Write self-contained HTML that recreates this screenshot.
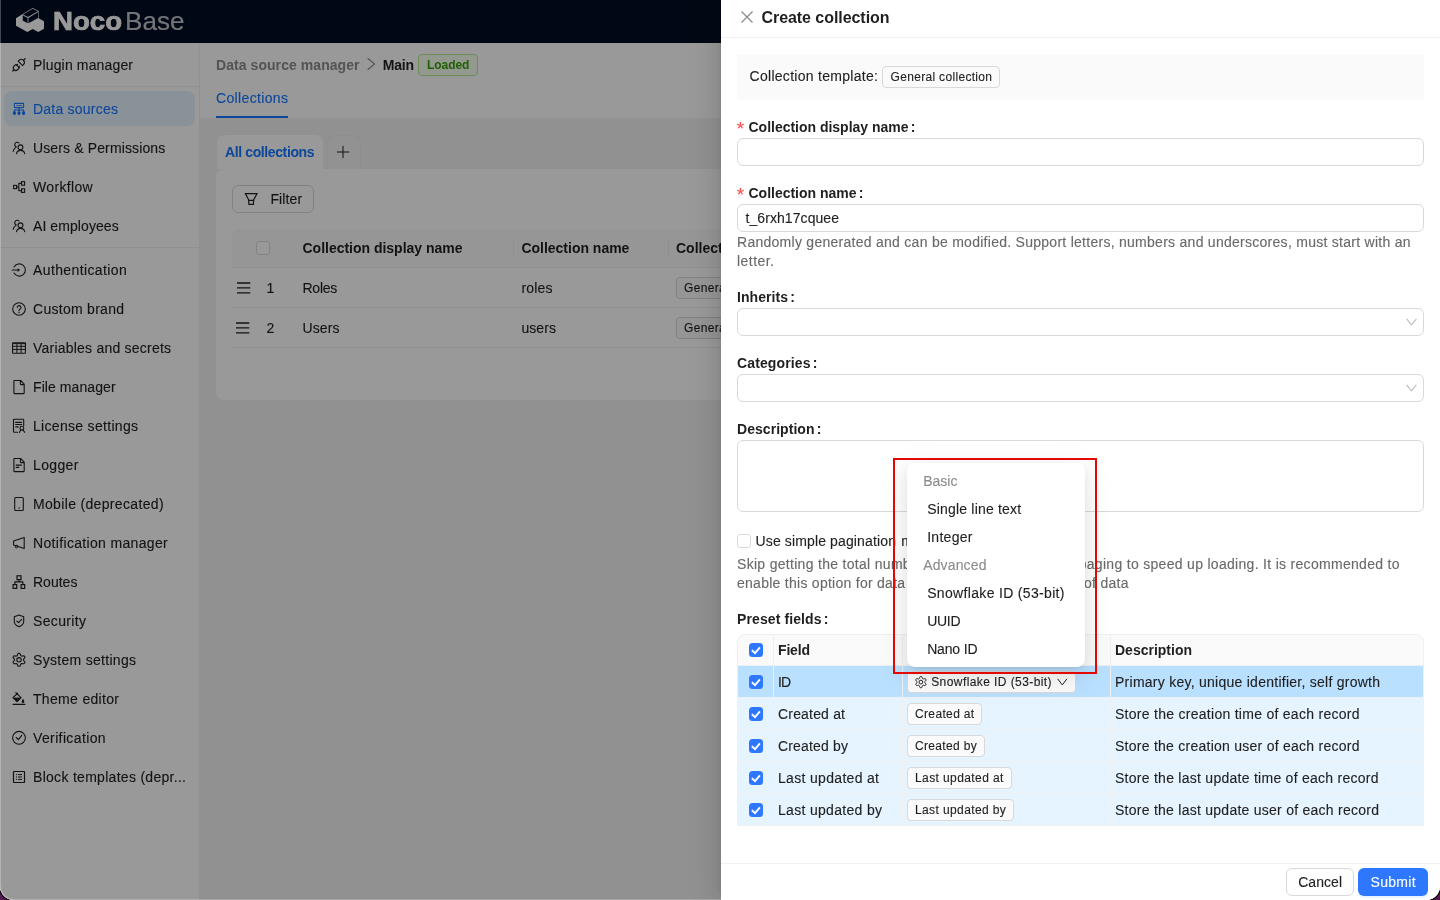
<!DOCTYPE html>
<html lang="en"><head><meta charset="utf-8"><title>Create collection - NocoBase</title>
<style>
*{box-sizing:border-box;margin:0;padding:0}
html,body{width:1440px;height:900px;overflow:hidden;background:#551a4f;font-family:"Liberation Sans",Arial,sans-serif;}
#win{will-change:transform;position:absolute;left:0;top:0;width:1440px;height:900px;overflow:hidden;border-radius:0 0 14px 14px;background:#fff;box-shadow:0 0 0 1.5px rgba(0,0,0,0.75)}
.t{position:absolute;white-space:nowrap;-webkit-text-stroke:0.12px currentColor;}
.b{position:absolute;}
svg{position:absolute;overflow:visible}
#base{position:absolute;left:0;top:0;width:1440px;height:900px;background:#f2f2f2}
#mask{position:absolute;left:0;top:0;width:1440px;height:900px;background:rgba(0,0,0,0.4)}
#drawer{position:absolute;left:721px;top:0;width:719px;height:900px;background:#fff;box-shadow:-6px 0 16px 0 rgba(0,0,0,0.08),-3px 0 6px -4px rgba(0,0,0,0.12),-9px 0 28px 8px rgba(0,0,0,0.05)}
.tag{position:absolute;border:1px solid #d9d9d9;background:#fafafa;border-radius:4px;height:22px}
.inp{position:absolute;border:1px solid #d9d9d9;background:#fff;border-radius:6px}
.cb{position:absolute;width:14px;height:14px;border-radius:3.5px;background:#2e78ff}
</style></head><body><div id="win">
<div id="base">
<div class="b" style="left:0px;top:0px;width:1440px;height:43px;background:#020e23"></div><span class="t" style="left:53px;top:5.5px;font-size:25px;line-height:30px;color:#fff;font-weight:700;-webkit-text-stroke:0;display:inline-block;transform-origin:0 50%;transform:scaleX(1.1040);-webkit-text-stroke:0.7px #fff;">Noco</span><span class="t" style="left:124.5px;top:5.5px;font-size:25px;line-height:30px;color:#fff;display:inline-block;transform-origin:0 50%;transform:scaleX(1.0442);opacity:.75;">Base</span><svg style="left:0;top:0" width="60" height="43" viewBox="0 0 60 43"><path d="M16 18.3L22.3 14.3L32.7 8L38.7 11V18.3L44 21.3V28.7L38.3 32L32.7 29L27.3 32L16 25.7Z" fill="#fff"/><path d="M23.0 14.5L32.7 8.7L37.9 11.2L28.0 17.1Z M22.7 15.2L27.6 18.0V23.3L22.7 20.5Z M28.4 17.9L38.2 12.0V18.0L28.4 23.3Z" fill="#020e23"/></svg><div class="b" style="left:0px;top:43px;width:199px;height:857px;background:#fff"></div><div class="b" style="left:199px;top:43px;width:1px;height:857px;background:#f0f0f0"></div><div class="b" style="left:200px;top:43px;width:1240px;height:75px;background:#fff"></div><div class="b" style="left:4px;top:91px;width:191px;height:35px;background:#e6f4ff;border-radius:8px"></div><div class="b" style="left:0px;top:86px;width:199px;height:1px;background:#f0f0f0"></div><div class="b" style="left:0px;top:247px;width:199px;height:1px;background:#f0f0f0"></div><span class="t" style="left:33px;top:55px;font-size:14px;line-height:20px;color:#1f1f1f;letter-spacing:0.149px;">Plugin manager</span><svg style="left:9px;top:55px" width="20" height="20" viewBox="9 55 20 20"><g transform="rotate(-45 19 64.8)"><path d="M10.2 64.8 h1.7" stroke="#1f1f1f" stroke-width="1.2" fill="none" stroke-linecap="round" stroke-linejoin="round" /><path d="M17.1 62.3 v5 h-2.6 a2.5 2.5 0 0 1 0-5z" stroke="#1f1f1f" stroke-width="1.1" fill="none" stroke-linecap="round" stroke-linejoin="round" /><path d="M17.1 63.5 h1.4 M17.1 66.1 h1.4" stroke="#1f1f1f" stroke-width="1.1" fill="none" stroke-linecap="round" stroke-linejoin="round" /><path d="M21 61.7 v6.2 h1.2 a3.1 3.1 0 0 0 0-6.2z" stroke="#1f1f1f" stroke-width="1.1" fill="none" stroke-linecap="round" stroke-linejoin="round" /><path d="M25.4 64.8 h2.4" stroke="#1f1f1f" stroke-width="1.2" fill="none" stroke-linecap="round" stroke-linejoin="round" /></g></svg><span class="t" style="left:33px;top:99px;font-size:14px;line-height:20px;color:#1677ff;letter-spacing:0.229px;">Data sources</span><svg style="left:9px;top:99px" width="20" height="20" viewBox="9 99 20 20"><path d="M14.9 103.4 h8.2 a0.5 0.5 0 0 1 .5 .5 v3.2 a0.5 0.5 0 0 1 -.5 .5 h-8.2 a0.5 0.5 0 0 1 -.5-.5 v-3.2 a.5 .5 0 0 1 .5-.5z" stroke="#1677ff" stroke-width="1.1" fill="none" stroke-linecap="round" stroke-linejoin="round" /><circle cx="17" cy="105.5" r="0.7" fill="#1677ff"/><path d="M18.6 105.5 h3" stroke="#1677ff" stroke-width="0.9" fill="none" stroke-linecap="round" stroke-linejoin="round" /><path d="M19 107.6 v3.6 M14.4 111.6 v-1.6 h9.2 v1.6" stroke="#1677ff" stroke-width="1.1" fill="none" stroke-linecap="round" stroke-linejoin="round" /><rect x="12.9" y="111.3" width="3" height="3.6" rx="1.3" fill="#1677ff"/><rect x="17.5" y="111.3" width="3" height="3.6" rx="1.3" fill="#1677ff"/><rect x="22.1" y="111.3" width="3" height="3.6" rx="1.3" fill="#1677ff"/></svg><span class="t" style="left:33px;top:138px;font-size:14px;line-height:20px;color:#1f1f1f;letter-spacing:0.132px;">Users &amp; Permissions</span><svg style="left:9px;top:138px" width="20" height="20" viewBox="9 138 20 20"><circle cx="20.5" cy="147.3" r="2.4" stroke="#1f1f1f" stroke-width="1.1" fill="none"/><path d="M16.5 153.7 a4.2 4.2 0 0 1 8.2 0" stroke="#1f1f1f" stroke-width="1.1" fill="none" stroke-linecap="round" stroke-linejoin="round" /><path d="M18.9 142.8 A2.5 2.5 0 1 0 16.45 147.05" stroke="#1f1f1f" stroke-width="1.1" fill="none" stroke-linecap="round" stroke-linejoin="round" /><path d="M15.6 147.6 Q13.6 148.8 13.2 151.4" stroke="#1f1f1f" stroke-width="1.1" fill="none" stroke-linecap="round" stroke-linejoin="round" /></svg><span class="t" style="left:33px;top:177px;font-size:14px;line-height:20px;color:#1f1f1f;letter-spacing:0.342px;">Workflow</span><svg style="left:9px;top:177px" width="20" height="20" viewBox="9 177 20 20"><rect x="13.6" y="185.4" width="3" height="3.2" stroke="#1f1f1f" stroke-width="1.1" fill="none"/><rect x="21.6" y="181.6" width="3" height="3.6" stroke="#1f1f1f" stroke-width="1.1" fill="none"/><rect x="21.6" y="188.8" width="3" height="3.6" stroke="#1f1f1f" stroke-width="1.1" fill="none"/><path d="M16.8 187 h2 M21.4 183.4 h-2.6 v7.2 h2.6" stroke="#1f1f1f" stroke-width="1.1" fill="none" stroke-linecap="round" stroke-linejoin="round" /></svg><span class="t" style="left:33px;top:216px;font-size:14px;line-height:20px;color:#1f1f1f;letter-spacing:0.080px;">AI employees</span><svg style="left:9px;top:216px" width="20" height="20" viewBox="9 216 20 20"><circle cx="20.5" cy="225.3" r="2.4" stroke="#1f1f1f" stroke-width="1.1" fill="none"/><path d="M16.5 231.7 a4.2 4.2 0 0 1 8.2 0" stroke="#1f1f1f" stroke-width="1.1" fill="none" stroke-linecap="round" stroke-linejoin="round" /><path d="M18.9 220.8 A2.5 2.5 0 1 0 16.45 225.05" stroke="#1f1f1f" stroke-width="1.1" fill="none" stroke-linecap="round" stroke-linejoin="round" /><path d="M15.6 225.6 Q13.6 226.8 13.2 229.4" stroke="#1f1f1f" stroke-width="1.1" fill="none" stroke-linecap="round" stroke-linejoin="round" /></svg><span class="t" style="left:33px;top:260px;font-size:14px;line-height:20px;color:#1f1f1f;letter-spacing:0.382px;">Authentication</span><svg style="left:9px;top:260px" width="20" height="20" viewBox="9 260 20 20"><path d="M14.02 266.95 A6.1 6.1 0 1 1 14.02 273.05" stroke="#1f1f1f" stroke-width="1.1" fill="none" stroke-linecap="round" stroke-linejoin="round" /><path d="M12.2 270 h6" stroke="#1f1f1f" stroke-width="1.1" fill="none" stroke-linecap="round" stroke-linejoin="round" /><path d="M17.6 268.1 l2.4 1.9 l-2.4 1.9z" fill="#1f1f1f"/></svg><span class="t" style="left:33px;top:299px;font-size:14px;line-height:20px;color:#1f1f1f;letter-spacing:0.279px;">Custom brand</span><svg style="left:9px;top:299px" width="20" height="20" viewBox="9 299 20 20"><circle cx="19" cy="309" r="6.3" stroke="#1f1f1f" stroke-width="1.1" fill="none"/><path d="M17.2 307.4 a1.9 1.9 0 1 1 2.6 1.9 q-.8 .4 -.8 1.5" stroke="#1f1f1f" stroke-width="1.1" fill="none" stroke-linecap="round" stroke-linejoin="round" /><circle cx="19" cy="312.4" r="0.7" fill="#1f1f1f"/></svg><span class="t" style="left:33px;top:338px;font-size:14px;line-height:20px;color:#1f1f1f;letter-spacing:0.221px;">Variables and secrets</span><svg style="left:9px;top:338px" width="20" height="20" viewBox="9 338 20 20"><rect x="12.6" y="342.8" width="12.8" height="10.4" rx="0.5" stroke="#1f1f1f" stroke-width="1.1" fill="none"/><path d="M12.6 343.6 h12.8 M12.6 346.3 h12.8 M12.6 349.4 h12.8 M16.9 344 v8.6 M21.1 344 v8.6" stroke="#1f1f1f" stroke-width="1" fill="none" stroke-linecap="round" stroke-linejoin="round" /></svg><span class="t" style="left:33px;top:377px;font-size:14px;line-height:20px;color:#1f1f1f;letter-spacing:0.082px;">File manager</span><svg style="left:9px;top:377px" width="20" height="20" viewBox="9 377 20 20"><path d="M14.4 380.5 h6.2 l3.6 3.6 v9 a.5 .5 0 0 1 -.5 .5 h-9.3 a.5 .5 0 0 1 -.5-.5 v-12.1 a.5 .5 0 0 1 .5-.5z M20.4 380.7 v3.4 a.5.5 0 0 0 .5 .5 h3.2" stroke="#1f1f1f" stroke-width="1.1" fill="none" stroke-linecap="round" stroke-linejoin="round" /></svg><span class="t" style="left:33px;top:416px;font-size:14px;line-height:20px;color:#1f1f1f;letter-spacing:0.307px;">License settings</span><svg style="left:9px;top:416px" width="20" height="20" viewBox="9 416 20 20"><path d="M17.5 432.2 h-3.4 a.6 .6 0 0 1 -.6 -.6 v-11.8 a.6 .6 0 0 1 .6-.6 h9 a.6.6 0 0 1 .6 .6 v5.6" stroke="#1f1f1f" stroke-width="1.1" fill="none" stroke-linecap="round" stroke-linejoin="round" /><path d="M15.6 422.4 h6 M15.6 424.5 h6" stroke="#1f1f1f" stroke-width="1.1" fill="none" stroke-linecap="round" stroke-linejoin="round" /><path d="M15.8 426.9 h2.4" stroke="#1f1f1f" stroke-width="1.2" fill="none" stroke-linecap="round" stroke-linejoin="round" /><circle cx="21.9" cy="428.2" r="1.9" stroke="#1f1f1f" stroke-width="1.1" fill="none"/><path d="M20.8 429.9 l-1.5 2.6 M23 429.9 l1.6 2.4" stroke="#1f1f1f" stroke-width="1.1" fill="none" stroke-linecap="round" stroke-linejoin="round" /></svg><span class="t" style="left:33px;top:455px;font-size:14px;line-height:20px;color:#1f1f1f;letter-spacing:0.342px;">Logger</span><svg style="left:9px;top:455px" width="20" height="20" viewBox="9 455 20 20"><path d="M14.4 458.5 h6.2 l3.6 3.6 v9 a.5 .5 0 0 1 -.5 .5 h-9.3 a.5 .5 0 0 1 -.5-.5 v-12.1 a.5 .5 0 0 1 .5-.5z M20.4 458.7 v3.4 a.5.5 0 0 0 .5 .5 h3.2" stroke="#1f1f1f" stroke-width="1.1" fill="none" stroke-linecap="round" stroke-linejoin="round" /><path d="M16.2 465.1 h5.2" stroke="#1f1f1f" stroke-width="1.3" fill="none" stroke-linecap="round" stroke-linejoin="round" /><path d="M16.2 467.4 h2.6" stroke="#1f1f1f" stroke-width="1.1" fill="none" stroke-linecap="round" stroke-linejoin="round" /></svg><span class="t" style="left:33px;top:494px;font-size:14px;line-height:20px;color:#1f1f1f;letter-spacing:0.338px;">Mobile (deprecated)</span><svg style="left:9px;top:494px" width="20" height="20" viewBox="9 494 20 20"><rect x="14.7" y="497.5" width="8.6" height="13" rx="1" stroke="#1f1f1f" stroke-width="1.1" fill="none"/><circle cx="19.1" cy="508" r="0.7" fill="#1f1f1f"/></svg><span class="t" style="left:33px;top:533px;font-size:14px;line-height:20px;color:#1f1f1f;letter-spacing:0.332px;">Notification manager</span><svg style="left:9px;top:533px" width="20" height="20" viewBox="9 533 20 20"><path d="M24.2 537.4 v11.2 l-10.6 -3.6 v-4z" stroke="#1f1f1f" stroke-width="1.1" fill="none" stroke-linecap="round" stroke-linejoin="round" /><circle cx="16.5" cy="546.6" r="1.3" stroke="#1f1f1f" stroke-width="1" fill="none"/></svg><span class="t" style="left:33px;top:572px;font-size:14px;line-height:20px;color:#1f1f1f;letter-spacing:0.008px;">Routes</span><svg style="left:9px;top:572px" width="20" height="20" viewBox="9 572 20 20"><rect x="17" y="575.8" width="4" height="3.8" stroke="#1f1f1f" stroke-width="1.2" fill="none"/><rect x="13.1" y="584.6" width="3.6" height="3.8" stroke="#1f1f1f" stroke-width="1.2" fill="none"/><rect x="21.1" y="584.6" width="3.6" height="3.8" stroke="#1f1f1f" stroke-width="1.2" fill="none"/><path d="M19 579.8 v2 M14.9 584.3 v-2.4 h8 v2.4" stroke="#1f1f1f" stroke-width="1.1" fill="none" stroke-linecap="round" stroke-linejoin="round" /></svg><span class="t" style="left:33px;top:611px;font-size:14px;line-height:20px;color:#1f1f1f;letter-spacing:0.347px;">Security</span><svg style="left:9px;top:611px" width="20" height="20" viewBox="9 611 20 20"><path d="M19 615.1 l4.7 1.6 v4.8 q0 3.4 -4.7 5.3 q-4.7 -1.9 -4.7 -5.3 v-4.8z" stroke="#1f1f1f" stroke-width="1.1" fill="none" stroke-linecap="round" stroke-linejoin="round" /><path d="M16.9 621.2 l1.6 1.5 l3.2 -3.4" stroke="#1f1f1f" stroke-width="1.1" fill="none" stroke-linecap="round" stroke-linejoin="round" /></svg><span class="t" style="left:33px;top:650px;font-size:14px;line-height:20px;color:#1f1f1f;letter-spacing:0.299px;">System settings</span><svg style="left:9px;top:650px" width="20" height="20" viewBox="9 650 20 20"><path d="M23.55 659.80L23.53 659.40L23.67 658.98L24.31 658.38L24.88 657.66L24.85 657.07L24.59 656.57L24.28 656.10L23.80 655.78L22.89 655.91L22.05 656.17L21.61 656.07L21.27 655.86L20.92 655.68L20.62 655.35L20.42 654.49L20.09 653.64L19.56 653.37L19.00 653.35L18.44 653.37L17.91 653.64L17.58 654.49L17.38 655.35L17.08 655.68L16.73 655.86L16.39 656.07L15.95 656.17L15.11 655.91L14.20 655.78L13.72 656.10L13.41 656.57L13.15 657.07L13.12 657.66L13.69 658.38L14.33 658.98L14.47 659.40L14.45 659.80L14.47 660.20L14.33 660.62L13.69 661.22L13.12 661.94L13.15 662.53L13.41 663.02L13.72 663.50L14.20 663.82L15.11 663.69L15.95 663.43L16.39 663.53L16.72 663.74L17.08 663.92L17.38 664.25L17.58 665.11L17.91 665.96L18.44 666.23L19.00 666.25L19.56 666.23L20.09 665.96L20.42 665.11L20.62 664.25L20.92 663.92L21.27 663.74L21.61 663.53L22.05 663.43L22.89 663.69L23.80 663.82L24.28 663.50L24.59 663.02L24.85 662.53L24.88 661.94L24.31 661.22L23.67 660.62L23.53 660.20Z" stroke="#1f1f1f" stroke-width="1.1" fill="none" stroke-linecap="round" stroke-linejoin="round" /><circle cx="19" cy="659.8" r="2.2" stroke="#1f1f1f" stroke-width="1.1" fill="none"/></svg><span class="t" style="left:33px;top:689px;font-size:14px;line-height:20px;color:#1f1f1f;letter-spacing:0.320px;">Theme editor</span><svg style="left:9px;top:689px" width="20" height="20" viewBox="9 689 20 20"><path d="M15.8 692.7 l5.2 5 l-4 4 l-4 -4 l4.6 -4.6" stroke="#1f1f1f" stroke-width="1.1" fill="none" stroke-linecap="round" stroke-linejoin="round" /><path d="M13.3 697.9 h7.4 l-3.7 3.7z" fill="#1f1f1f" stroke="#1f1f1f" stroke-width="0.6"/><path d="M23 698.8 q1.5 2 1.3 2.9 a1.3 1.3 0 0 1 -2.6 0 q-.2 -.9 1.3 -2.9z" fill="#1f1f1f"/><path d="M13.2 704.4 h11.6" stroke="#1f1f1f" stroke-width="1.3" fill="none" stroke-linecap="round" stroke-linejoin="round" /></svg><span class="t" style="left:33px;top:728px;font-size:14px;line-height:20px;color:#1f1f1f;letter-spacing:0.374px;">Verification</span><svg style="left:9px;top:728px" width="20" height="20" viewBox="9 728 20 20"><circle cx="19" cy="737.8" r="6.4" stroke="#1f1f1f" stroke-width="1.1" fill="none"/><path d="M16.2 737.5 l2.2 2.1 l3.3 -4.2" stroke="#1f1f1f" stroke-width="1.1" fill="none" stroke-linecap="round" stroke-linejoin="round" /></svg><span class="t" style="left:33px;top:767px;font-size:14px;line-height:20px;color:#1f1f1f;letter-spacing:0.292px;">Block templates (depr...</span><svg style="left:9px;top:767px" width="20" height="20" viewBox="9 767 20 20"><rect x="13.5" y="771.5" width="11" height="11" rx="0.4" stroke="#1f1f1f" stroke-width="1.2" fill="none"/><rect x="16" y="774.1" width="1" height="1" fill="#1f1f1f"/><path d="M18.4 774.6 h3.2" stroke="#1f1f1f" stroke-width="1" fill="none" stroke-linecap="round" stroke-linejoin="round" /><rect x="16" y="776.5" width="1" height="1" fill="#1f1f1f"/><path d="M18.4 777 h3.2" stroke="#1f1f1f" stroke-width="1" fill="none" stroke-linecap="round" stroke-linejoin="round" /><rect x="16" y="778.9" width="1" height="1" fill="#1f1f1f"/><path d="M18.4 779.4 h3.2" stroke="#1f1f1f" stroke-width="1" fill="none" stroke-linecap="round" stroke-linejoin="round" /></svg><span class="t" style="left:216px;top:54.6px;font-size:14px;line-height:20px;color:#8c8c8c;font-weight:700;-webkit-text-stroke:0;letter-spacing:0.062px;">Data source manager</span><svg style="left:367px;top:57px" width="9" height="14" viewBox="0 0 9 14"><path d="M1 1.5L7.5 7L1 12.5" stroke="#8c8c8c" stroke-width="1.1" fill="none" stroke-linecap="round" stroke-linejoin="round" /></svg><span class="t" style="left:382.7px;top:54.6px;font-size:14px;line-height:20px;color:#1f1f1f;font-weight:700;-webkit-text-stroke:0;letter-spacing:-0.196px;">Main</span><div class="tag" style="left:418px;top:54px;width:60px;height:22px;border-color:#b7eb8f;background:#f6ffed"></div><span class="t" style="left:427px;top:55px;font-size:12px;line-height:20px;color:#389e0d;font-weight:700;-webkit-text-stroke:0;letter-spacing:-0.053px;">Loaded</span><span class="t" style="left:216px;top:88px;font-size:14px;line-height:20px;color:#1677ff;letter-spacing:0.352px;">Collections</span><div class="b" style="left:216px;top:116px;width:72px;height:2px;background:#1677ff"></div><div class="b" style="left:217px;top:135px;width:106px;height:34px;background:#fff;border-radius:8px 8px 0 0"></div><span class="t" style="left:225px;top:142px;font-size:14px;line-height:20px;color:#1677ff;font-weight:700;-webkit-text-stroke:0;letter-spacing:-0.386px;">All collections</span><div class="b" style="left:326.5px;top:134.5px;width:34px;height:34px;background:rgba(255,255,255,0.12);border-radius:8px 8px 0 0;border:1px solid #ececec;border-bottom:none"></div><svg style="left:337px;top:146px" width="12" height="12" viewBox="0 0 12 12"><path d="M6 0.3V11.7M0.3 6H11.7" stroke="#1f1f1f" stroke-width="1" fill="none" stroke-linecap="round" stroke-linejoin="round" /></svg><div class="b" style="left:216px;top:169px;width:1224px;height:231px;background:#fff;border-radius:8px"></div><div class="b" style="left:232px;top:185px;width:81.5px;height:27.5px;border:1px solid #d9d9d9;border-radius:6px;background:#fff"></div><svg style="left:244px;top:192px" width="14" height="14" viewBox="0 0 14 14"><path d="M1.2 1.7H13.2 M1.6 2L4.9 8.2 M12.8 2L9.5 8.2 M4.6 8.3H9.8" stroke="#1f1f1f" stroke-width="1.2" fill="none" stroke-linecap="round" stroke-linejoin="round" /><path d="M4.8 8.3V12.3H9.5V8.3" stroke="#1f1f1f" stroke-width="1.2" fill="none" stroke-linecap="round" stroke-linejoin="round" /></svg><span class="t" style="left:270.4px;top:189px;font-size:14px;line-height:20px;color:#1f1f1f;letter-spacing:0.138px;">Filter</span><div class="b" style="left:232px;top:229px;width:1208px;height:39px;background:#fafafa;border-radius:8px 0 0 0;border-bottom:1px solid #f0f0f0"></div><div class="b" style="left:232px;top:307px;width:1208px;height:1px;background:#f0f0f0"></div><div class="b" style="left:232px;top:347px;width:1208px;height:1px;background:#f0f0f0"></div><div class="b" style="left:513px;top:240px;width:1px;height:18px;background:#f0f0f0"></div><div class="b" style="left:668px;top:240px;width:1px;height:18px;background:#f0f0f0"></div><div class="b" style="left:256px;top:241px;width:14px;height:14px;border:1px solid #d9d9d9;border-radius:3px;background:#fff"></div><span class="t" style="left:302.5px;top:238px;font-size:14px;line-height:20px;color:#1f1f1f;font-weight:700;-webkit-text-stroke:0;letter-spacing:-0.012px;">Collection display name</span><span class="t" style="left:521.4px;top:238px;font-size:14px;line-height:20px;color:#1f1f1f;font-weight:700;-webkit-text-stroke:0;letter-spacing:-0.009px;">Collection name</span><span class="t" style="left:676px;top:238px;font-size:14px;line-height:20px;color:#1f1f1f;font-weight:700;-webkit-text-stroke:0;">Collection template</span><span class="t" style="left:266.5px;top:278px;font-size:14px;line-height:20px;color:#1f1f1f;">1</span><span class="t" style="left:302.5px;top:278px;font-size:14px;line-height:20px;color:#1f1f1f;letter-spacing:-0.248px;">Roles</span><span class="t" style="left:521.4px;top:278px;font-size:14px;line-height:20px;color:#1f1f1f;letter-spacing:0.189px;">roles</span><div class="tag" style="left:676px;top:277px;width:118px"></div><span class="t" style="left:684px;top:278px;font-size:12px;line-height:20px;color:#1f1f1f;letter-spacing:0.321px;">General collection</span><svg style="left:237.3px;top:281.9px" width="14" height="12" viewBox="0 0 14 12"><path d="M0 1h13.3M0 5.9h13.3M0 10.8h13.3" stroke="#1f1f1f" stroke-width="1.3" fill="none"/></svg><span class="t" style="left:266.5px;top:318px;font-size:14px;line-height:20px;color:#1f1f1f;">2</span><span class="t" style="left:302.5px;top:318px;font-size:14px;line-height:20px;color:#1f1f1f;letter-spacing:0.110px;">Users</span><span class="t" style="left:521.4px;top:318px;font-size:14px;line-height:20px;color:#1f1f1f;letter-spacing:0.091px;">users</span><div class="tag" style="left:676px;top:317px;width:118px"></div><span class="t" style="left:684px;top:318px;font-size:12px;line-height:20px;color:#1f1f1f;letter-spacing:0.321px;">General collection</span><svg style="left:236.3px;top:321.9px" width="14" height="12" viewBox="0 0 14 12"><path d="M0 1h13.3M0 5.9h13.3M0 10.8h13.3" stroke="#1f1f1f" stroke-width="1.3" fill="none"/></svg></div>
<div id="mask"></div>
<div id="drawer"><div class="b" style="left:0px;top:37px;width:719px;height:1px;background:#f0f0f0"></div><svg style="left:20px;top:11px" width="12" height="12" viewBox="0 0 12 12"><path d="M0.5 0.5L11.5 11.5M11.5 0.5L0.5 11.5" stroke="#8c8c8c" stroke-width="1.3" fill="none"/></svg><span class="t" style="left:40.5px;top:8px;font-size:16px;line-height:20px;color:#1f1f1f;font-weight:700;-webkit-text-stroke:0;letter-spacing:-0.058px;">Create collection</span><div class="b" style="left:16px;top:54px;width:687px;height:46px;background:#fafafa"></div><span class="t" style="left:28.5px;top:66px;font-size:14px;line-height:20px;color:#1f1f1f;letter-spacing:0.292px;">Collection template:</span><div class="tag" style="left:161px;top:66px;width:118px"></div><span class="t" style="left:169.5px;top:67px;font-size:12px;line-height:20px;color:#1f1f1f;letter-spacing:0.321px;">General collection</span><span class="t" style="left:15.8px;top:119px;font-size:19px;line-height:20px;color:#ff4d4f;">*</span><span class="t" style="left:27.5px;top:117px;font-size:14px;line-height:20px;color:#1f1f1f;font-weight:700;-webkit-text-stroke:0;letter-spacing:-0.012px;">Collection display name</span><span class="t" style="left:189.7px;top:117px;font-size:14px;line-height:20px;color:#1f1f1f;font-weight:700;-webkit-text-stroke:0;">:</span><div class="inp" style="left:16px;top:138px;width:687px;height:28px"></div><span class="t" style="left:15.8px;top:185px;font-size:19px;line-height:20px;color:#ff4d4f;">*</span><span class="t" style="left:27.5px;top:183px;font-size:14px;line-height:20px;color:#1f1f1f;font-weight:700;-webkit-text-stroke:0;letter-spacing:-0.009px;">Collection name</span><span class="t" style="left:137.7px;top:183px;font-size:14px;line-height:20px;color:#1f1f1f;font-weight:700;-webkit-text-stroke:0;">:</span><div class="inp" style="left:16px;top:204px;width:687px;height:28px"></div><span class="t" style="left:24.5px;top:208px;font-size:14px;line-height:20px;color:#1f1f1f;letter-spacing:0.073px;">t_6rxh17cquee</span><span class="t" style="left:16px;top:232px;font-size:14px;line-height:20px;color:#696969;letter-spacing:0.271px;">Randomly generated and can be modified. Support letters, numbers and underscores, must start with an</span><span class="t" style="left:16px;top:251px;font-size:14px;line-height:20px;color:#696969;letter-spacing:0.460px;">letter.</span><span class="t" style="left:16px;top:287px;font-size:14px;line-height:20px;color:#1f1f1f;font-weight:700;-webkit-text-stroke:0;letter-spacing:0.062px;">Inherits</span><span class="t" style="left:69.2px;top:287px;font-size:14px;line-height:20px;color:#1f1f1f;font-weight:700;-webkit-text-stroke:0;">:</span><div class="inp" style="left:16px;top:308px;width:687px;height:28px"></div><svg style="left:684.5px;top:318px" width="11" height="8" viewBox="0 0 11 8"><path d="M0.6 0.8L5.5 6.8L10.4 0.8" stroke="#bfbfbf" stroke-width="1.2" fill="none"/></svg><span class="t" style="left:16px;top:353px;font-size:14px;line-height:20px;color:#1f1f1f;font-weight:700;-webkit-text-stroke:0;letter-spacing:0.127px;">Categories</span><span class="t" style="left:91.7px;top:353px;font-size:14px;line-height:20px;color:#1f1f1f;font-weight:700;-webkit-text-stroke:0;">:</span><div class="inp" style="left:16px;top:374px;width:687px;height:28px"></div><svg style="left:684.5px;top:384px" width="11" height="8" viewBox="0 0 11 8"><path d="M0.6 0.8L5.5 6.8L10.4 0.8" stroke="#bfbfbf" stroke-width="1.2" fill="none"/></svg><span class="t" style="left:16px;top:419px;font-size:14px;line-height:20px;color:#1f1f1f;font-weight:700;-webkit-text-stroke:0;letter-spacing:0.049px;">Description</span><span class="t" style="left:95.7px;top:419px;font-size:14px;line-height:20px;color:#1f1f1f;font-weight:700;-webkit-text-stroke:0;">:</span><div class="inp" style="left:16px;top:440px;width:687px;height:72px"></div><div class="b" style="left:16px;top:534px;width:14px;height:14px;border:1px solid #d9d9d9;border-radius:3px;background:#fff"></div><span class="t" style="left:34.5px;top:531px;font-size:14px;line-height:20px;color:#1f1f1f;letter-spacing:0.134px;">Use simple pagination</span><span class="t" style="left:180.3px;top:531px;font-size:14px;line-height:20px;color:#1f1f1f;">mode</span><span class="t" style="left:16px;top:554px;font-size:14px;line-height:20px;color:#696969;letter-spacing:0.303px;">Skip getting the total number of table records during paging to speed up loading. It is recommended to</span><span class="t" style="left:16px;top:573px;font-size:14px;line-height:20px;color:#696969;letter-spacing:0.268px;">enable this option for data tables with a large amount of data</span><span class="t" style="left:16px;top:609px;font-size:14px;line-height:20px;color:#1f1f1f;font-weight:700;-webkit-text-stroke:0;letter-spacing:0.103px;">Preset fields</span><span class="t" style="left:102.7px;top:609px;font-size:14px;line-height:20px;color:#1f1f1f;font-weight:700;-webkit-text-stroke:0;">:</span><div class="b" style="left:16px;top:634px;width:687px;height:32px;background:#fafafa;border-radius:8px 8px 0 0;border:1px solid #f0f0f0"></div><div class="b" style="left:16px;top:666px;width:687px;height:32px;background:#bae0ff"></div><div class="b" style="left:16px;top:698px;width:687px;height:128px;background:#e6f4ff"></div><div class="b" style="left:16px;top:697px;width:687px;height:1px;background:#f0f0f0"></div><div class="b" style="left:16px;top:729px;width:687px;height:1px;background:#f0f0f0"></div><div class="b" style="left:16px;top:761px;width:687px;height:1px;background:#f0f0f0"></div><div class="b" style="left:16px;top:793px;width:687px;height:1px;background:#f0f0f0"></div><div class="b" style="left:16px;top:825px;width:687px;height:1px;background:#f0f0f0"></div><div class="b" style="left:16px;top:642px;width:1px;height:184px;background:#f0f0f0"></div><div class="b" style="left:52px;top:634px;width:1px;height:192px;background:#f0f0f0"></div><div class="b" style="left:181px;top:634px;width:1px;height:192px;background:#f0f0f0"></div><div class="b" style="left:389px;top:634px;width:1px;height:192px;background:#f0f0f0"></div><div class="b" style="left:702px;top:642px;width:1px;height:184px;background:#f0f0f0"></div><span class="t" style="left:57px;top:640px;font-size:14px;line-height:20px;color:#1f1f1f;font-weight:700;-webkit-text-stroke:0;letter-spacing:-0.167px;">Field</span><span class="t" style="left:394px;top:640px;font-size:14px;line-height:20px;color:#1f1f1f;font-weight:700;-webkit-text-stroke:0;letter-spacing:-0.001px;">Description</span><span class="t" style="left:186px;top:640px;font-size:14px;line-height:20px;color:#1f1f1f;font-weight:700;-webkit-text-stroke:0;">Interface</span><div class="cb" style="left:28px;top:643px"><svg style="left:0;top:0" width="14" height="14" viewBox="0 0 14 14"><path d="M2.9 7.2L6.0 10.1L10.9 4.3" stroke="#fff" stroke-width="1.9" fill="none"/></svg></div><div class="cb" style="left:28px;top:675px"><svg style="left:0;top:0" width="14" height="14" viewBox="0 0 14 14"><path d="M2.9 7.2L6.0 10.1L10.9 4.3" stroke="#fff" stroke-width="1.9" fill="none"/></svg></div><span class="t" style="left:57px;top:672px;font-size:14px;line-height:20px;color:#1f1f1f;letter-spacing:-0.800px;">ID</span><span class="t" style="left:394px;top:672px;font-size:14px;line-height:20px;color:#1f1f1f;letter-spacing:0.258px;">Primary key, unique identifier, self growth</span><div class="cb" style="left:28px;top:707px"><svg style="left:0;top:0" width="14" height="14" viewBox="0 0 14 14"><path d="M2.9 7.2L6.0 10.1L10.9 4.3" stroke="#fff" stroke-width="1.9" fill="none"/></svg></div><span class="t" style="left:57px;top:704px;font-size:14px;line-height:20px;color:#1f1f1f;letter-spacing:0.181px;">Created at</span><span class="t" style="left:394px;top:704px;font-size:14px;line-height:20px;color:#1f1f1f;letter-spacing:0.278px;">Store the creation time of each record</span><div class="tag" style="left:186px;top:703px;width:74.5px;background:#fafafa"></div><span class="t" style="left:194px;top:703.5px;font-size:12px;line-height:20px;color:#1f1f1f;letter-spacing:0.352px;">Created at</span><div class="cb" style="left:28px;top:739px"><svg style="left:0;top:0" width="14" height="14" viewBox="0 0 14 14"><path d="M2.9 7.2L6.0 10.1L10.9 4.3" stroke="#fff" stroke-width="1.9" fill="none"/></svg></div><span class="t" style="left:57px;top:736px;font-size:14px;line-height:20px;color:#1f1f1f;letter-spacing:0.169px;">Created by</span><span class="t" style="left:394px;top:736px;font-size:14px;line-height:20px;color:#1f1f1f;letter-spacing:0.256px;">Store the creation user of each record</span><div class="tag" style="left:186px;top:735px;width:77.5px;background:#fafafa"></div><span class="t" style="left:194px;top:735.5px;font-size:12px;line-height:20px;color:#1f1f1f;letter-spacing:0.334px;">Created by</span><div class="cb" style="left:28px;top:771px"><svg style="left:0;top:0" width="14" height="14" viewBox="0 0 14 14"><path d="M2.9 7.2L6.0 10.1L10.9 4.3" stroke="#fff" stroke-width="1.9" fill="none"/></svg></div><span class="t" style="left:57px;top:768px;font-size:14px;line-height:20px;color:#1f1f1f;letter-spacing:0.320px;">Last updated at</span><span class="t" style="left:394px;top:768px;font-size:14px;line-height:20px;color:#1f1f1f;letter-spacing:0.265px;">Store the last update time of each record</span><div class="tag" style="left:186px;top:767px;width:104.5px;background:#fafafa"></div><span class="t" style="left:194px;top:767.5px;font-size:12px;line-height:20px;color:#1f1f1f;letter-spacing:0.405px;">Last updated at</span><div class="cb" style="left:28px;top:803px"><svg style="left:0;top:0" width="14" height="14" viewBox="0 0 14 14"><path d="M2.9 7.2L6.0 10.1L10.9 4.3" stroke="#fff" stroke-width="1.9" fill="none"/></svg></div><span class="t" style="left:57px;top:800px;font-size:14px;line-height:20px;color:#1f1f1f;letter-spacing:0.312px;">Last updated by</span><span class="t" style="left:394px;top:800px;font-size:14px;line-height:20px;color:#1f1f1f;letter-spacing:0.258px;">Store the last update user of each record</span><div class="tag" style="left:186px;top:799px;width:106.5px;background:#fafafa"></div><span class="t" style="left:194px;top:799.5px;font-size:12px;line-height:20px;color:#1f1f1f;letter-spacing:0.386px;">Last updated by</span><div class="tag" style="left:186px;top:671px;width:168.5px"></div><span class="t" style="left:210.2px;top:671.5px;font-size:12px;line-height:20px;color:#1f1f1f;letter-spacing:0.418px;">Snowflake ID (53-bit)</span><svg style="left:336px;top:678px" width="11" height="8" viewBox="0 0 11 8"><path d="M0.7 0.9L5.3 6.9L9.9 0.9" stroke="#1f1f1f" stroke-width="1" fill="none"/></svg><svg style="left:194px;top:676px" width="12" height="12" viewBox="0 0 12 12"><path d="M9.80 6.10L9.79 5.76L9.91 5.39L10.49 4.87L11.00 4.24L10.98 3.73L10.75 3.30L10.49 2.89L10.06 2.61L9.26 2.74L8.52 2.98L8.14 2.91L7.85 2.72L7.55 2.57L7.29 2.28L7.13 1.51L6.84 0.75L6.39 0.52L5.90 0.50L5.41 0.52L4.96 0.75L4.67 1.51L4.51 2.28L4.25 2.57L3.95 2.72L3.66 2.91L3.28 2.98L2.54 2.74L1.74 2.61L1.31 2.89L1.05 3.30L0.82 3.73L0.80 4.24L1.31 4.87L1.89 5.39L2.01 5.76L2.00 6.10L2.01 6.44L1.89 6.81L1.31 7.33L0.80 7.96L0.82 8.47L1.05 8.90L1.31 9.31L1.74 9.59L2.54 9.46L3.28 9.22L3.66 9.29L3.95 9.48L4.25 9.63L4.51 9.92L4.67 10.69L4.96 11.45L5.41 11.68L5.90 11.70L6.39 11.68L6.84 11.45L7.13 10.69L7.29 9.92L7.55 9.63L7.85 9.48L8.14 9.29L8.52 9.22L9.26 9.46L10.06 9.59L10.49 9.31L10.75 8.90L10.98 8.47L11.00 7.96L10.49 7.33L9.91 6.81L9.79 6.44Z" stroke="#1f1f1f" stroke-width="1" fill="none" stroke-linejoin="round"/><circle cx="5.9" cy="6.1" r="1.9" stroke="#1f1f1f" stroke-width="1" fill="none"/></svg><div class="b" style="left:186px;top:463px;width:178px;height:204px;background:#fff;border-radius:8px;box-shadow:0 6px 16px 0 rgba(0,0,0,0.08),0 3px 6px -4px rgba(0,0,0,0.12),0 9px 28px 8px rgba(0,0,0,0.05)"></div><span class="t" style="left:202.2px;top:471px;font-size:14px;line-height:20px;color:#8c8c8c;letter-spacing:0.016px;">Basic</span><span class="t" style="left:206.2px;top:499px;font-size:14px;line-height:20px;color:#1f1f1f;letter-spacing:0.196px;">Single line text</span><span class="t" style="left:206.2px;top:527px;font-size:14px;line-height:20px;color:#1f1f1f;letter-spacing:0.286px;">Integer</span><span class="t" style="left:202.2px;top:555px;font-size:14px;line-height:20px;color:#8c8c8c;letter-spacing:0.148px;">Advanced</span><span class="t" style="left:206.2px;top:583px;font-size:14px;line-height:20px;color:#1f1f1f;letter-spacing:0.329px;">Snowflake ID (53-bit)</span><span class="t" style="left:206.2px;top:611px;font-size:14px;line-height:20px;color:#1f1f1f;letter-spacing:-0.307px;">UUID</span><span class="t" style="left:206.2px;top:639px;font-size:14px;line-height:20px;color:#1f1f1f;letter-spacing:-0.176px;">Nano ID</span><div class="b" style="left:172px;top:458px;width:204px;height:216px;border:2px solid #e30800"></div><div class="b" style="left:0px;top:862.5px;width:719px;height:1px;background:#f0f0f0"></div><div class="b" style="left:565px;top:868px;width:68px;height:28px;border:1px solid #d9d9d9;border-radius:6px;background:#fff"></div><span class="t" style="left:577.2px;top:872px;font-size:14px;line-height:20px;color:#1f1f1f;letter-spacing:0.044px;">Cancel</span><div class="b" style="left:637px;top:868px;width:70px;height:28px;border-radius:6px;background:#2e78ff;box-shadow:0 2px 0 rgba(5,145,255,0.1)"></div><span class="t" style="left:649.5px;top:872px;font-size:14px;line-height:20px;color:#fff;letter-spacing:0.306px;">Submit</span></div><div class="b" style="left:0;top:-20px;width:1440px;height:920px;border-radius:0 0 14px 14px;box-shadow:inset 1px 0 0 rgba(255,255,255,0.26),inset 0 -1px 0 rgba(255,255,255,0.2)"></div></div></body></html>
